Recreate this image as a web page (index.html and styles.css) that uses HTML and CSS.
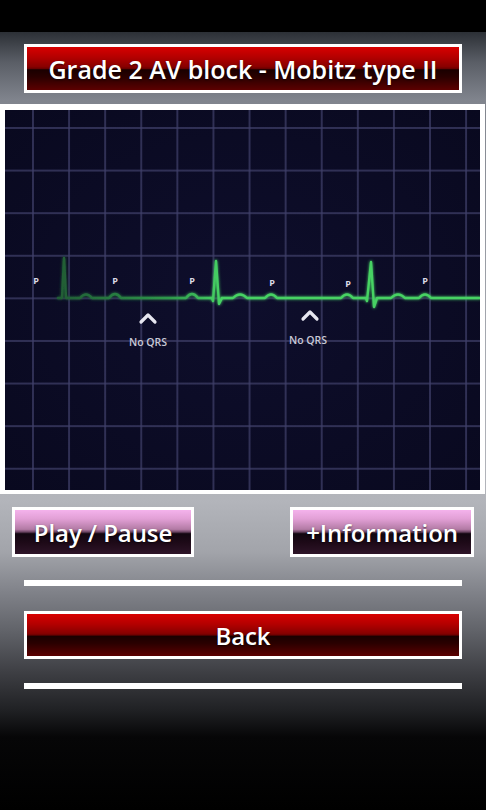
FILE: index.html
```html
<!DOCTYPE html>
<html lang="en">
<head>
<meta charset="utf-8">
<title>Grade 2 AV block - Mobitz type II</title>
<link rel="stylesheet" href="styles.css">
</head>
<body>
<div class="screen">
  <div class="status"></div>
  <main class="content">
    <div class="row-wide">
      <div class="btn btn-red title">Grade 2 AV block - Mobitz type II</div>
    </div>
    <div class="ecg">
      <div class="ecg-inner">
        <svg class="trace" viewBox="0 0 475 380" width="475" height="380">
          <defs>
            <linearGradient id="fade" gradientUnits="userSpaceOnUse" x1="50" y1="0" x2="215" y2="0">
              <stop offset="0" stop-color="#1f5a34"/>
              <stop offset="0.7" stop-color="#2f9a4c"/>
              <stop offset="1" stop-color="#46d264"/>
            </linearGradient>
            <filter id="glow" x="-10%" y="-50%" width="120%" height="200%">
              <feGaussianBlur stdDeviation="1.6" result="b"/>
              <feMerge><feMergeNode in="b"/><feMergeNode in="SourceGraphic"/></feMerge>
            </filter>
          </defs>
          <g fill="none" stroke-width="2.4" stroke-linejoin="round" stroke-linecap="round" filter="url(#glow)">
            <path stroke="url(#fade)" d="M53,188 L57,188 L59,148 L61,188 L75,188 Q81,181 87,188 L104,188 Q110,180 116,188 L181,188 Q187,180 193,188 L207,188 L208,191 L211,151 L214,194 L217,188"/>
            <path stroke="#46d264" d="M217,188 L228,188 Q235,181 242,188 L260,188 Q266,181 272,188 L336,188 Q342,181 348,188 L361,188 L362,191 L366,152 L369,197 L372,188 L386,188 Q393,181 400,188 L414,188 Q420,181 426,188 L475,188"/>
          </g>
          <g class="lbl">
            <text x="31" y="174">P</text>
            <text x="110" y="174">P</text>
            <text x="187" y="174">P</text>
            <text x="267" y="176">P</text>
            <text x="343" y="177">P</text>
            <text x="420" y="174">P</text>
          </g>
          <g fill="none" stroke="#e6e6f0" stroke-width="3.2" stroke-linecap="round" stroke-linejoin="round">
            <path d="M136,212 L143,205 L150,212"/>
            <path d="M298,209 L305,202 L312,209"/>
          </g>
          <g class="noqrs">
            <text x="143" y="236">No QRS</text>
            <text x="303" y="234">No QRS</text>
          </g>
        </svg>
      </div>
    </div>
    <div class="row-buttons">
      <div class="btn btn-pink play">Play / Pause</div>
      <div class="btn btn-pink info">+Information</div>
    </div>
    <div class="row-wide"><div class="rule"></div></div>
    <div class="row-wide back-row">
      <div class="btn btn-red back">Back</div>
    </div>
    <div class="row-wide"><div class="rule rule2"></div></div>
  </main>
</div>
</body>
</html>
```
FILE: styles.css
```css
* { box-sizing: border-box; }
html, body { margin: 0; padding: 0; }
body {
  width: 486px;
  height: 810px;
  background: #000;
  font-family: "Open Sans", "Noto Sans", sans-serif;
  overflow: hidden;
}
.screen {
  display: flex;
  flex-direction: column;
  height: 810px;
}
.status {
  height: 32px;
  background: #000;
  flex: none;
}
.content {
  flex: 1;
  display: flex;
  flex-direction: column;
  background: linear-gradient(to bottom,
    #2c3036 0px,
    #5a5e66 30px,
    #80848d 68px,
    #a4a7ae 300px,
    #b3b5bb 468px,
    #a2a4aa 520px,
    #808289 560px,
    #606268 600px,
    #3e3f44 640px,
    #202124 678px,
    #060607 705px,
    #000 100%);
}
.row-wide {
  padding: 0 24px;
}
.btn {
  border: 3px solid #fff;
  color: #fff;
  font-weight: 600;
  font-size: 24px;
  display: flex;
  align-items: center;
  justify-content: center;
  white-space: nowrap;
  text-shadow: 0 1px 2px rgba(0,0,0,0.6);
  letter-spacing: -0.1px;
}
.btn-red {
  background: linear-gradient(to bottom,
    #d80000 0%,
    #b20000 25%,
    #880000 46%,
    #6c0000 50%,
    #1a0000 53%,
    #2a0000 70%,
    #5c0000 100%);
}
.btn-pink {
  background: linear-gradient(to bottom,
    #f4b2ec 0%,
    #e2a0d6 20%,
    #b27aa4 44%,
    #6a4462 50%,
    #120610 54%,
    #1e0a18 75%,
    #2e1428 100%);
}
.title {
  margin-top: 12px;
  height: 49px;
  font-size: 25px;
  letter-spacing: 0;
}
.ecg {
  margin-top: 11px;
  width: 485px;
  height: 390px;
  background: #fff;
  padding: 6px 5px 4px 5px;
}
.ecg-inner {
  width: 475px;
  height: 380px;
  background-color: #0b0b26;
  background-image:
    linear-gradient(to right, rgba(64,64,106,0.7) 2px, transparent 2px),
    linear-gradient(to bottom, rgba(64,64,106,0.7) 2px, transparent 2px),
    radial-gradient(ellipse at 50% 50%, #0e0e2c 0%, #09091f 100%);
  background-size: 36.1px 42.6px, 36.1px 42.6px, 100% 100%;
  background-position: 27px 17px, 27px 17px, 0 0;
}
.trace {
  display: block;
}
.lbl text {
  fill: #dcdce6;
  font-family: "Open Sans", "Noto Sans", sans-serif;
  font-weight: 700;
  font-size: 9px;
  text-anchor: middle;
}
.noqrs text {
  fill: #c8c8d6;
  font-family: "Open Sans", "Noto Sans", sans-serif;
  font-weight: 600;
  font-size: 10.5px;
  text-anchor: middle;
}
.row-buttons {
  display: flex;
  justify-content: space-between;
  padding: 0 12px;
  margin-top: 13px;
}
.play {
  width: 182px;
  height: 50px;
}
.info {
  width: 184px;
  height: 50px;
}
.rule {
  margin-top: 23px;
  height: 6px;
  background: #fff;
}
.back {
  margin-top: 25px;
  height: 48px;
}
.rule2 {
  margin-top: 24px;
}
```
